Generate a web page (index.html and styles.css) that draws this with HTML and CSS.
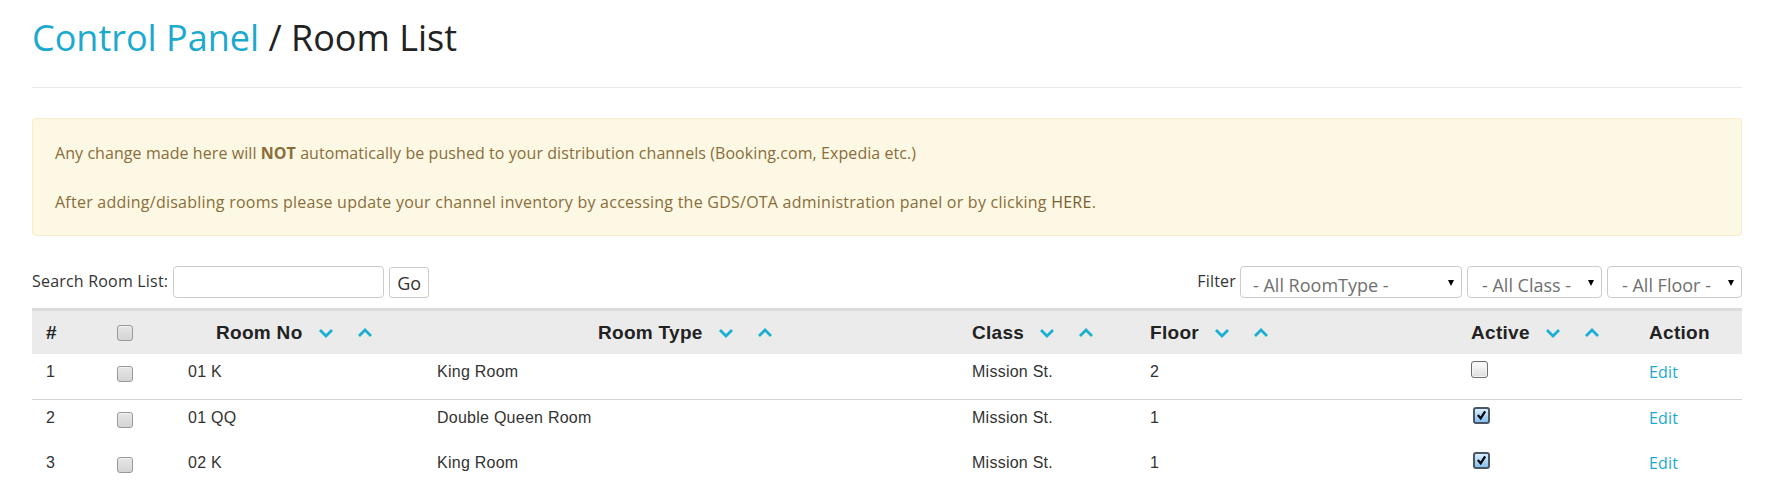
FILE: index.html
```html
<!DOCTYPE html>
<html lang="en">
<head>
<meta charset="utf-8">
<title>Room List</title>
<link rel="stylesheet" href="styles.css">
</head>
<body>
<div class="page">
  <h1 class="title"><span class="crumb">Control Panel</span> / Room List</h1>
  <hr class="rule">
  <div class="alert">
    <p class="first">Any change made here will <b>NOT</b> automatically be pushed to your distribution channels (Booking.com, Expedia etc.)</p>
    <p class="second">After adding/disabling rooms please update your channel inventory by accessing the GDS/OTA administration panel or by clicking <a class="here">HERE</a>.</p>
  </div>
  <div class="toolbar">
    <div class="search">
      <label class="lbl">Search Room List:</label>
      <input class="input" type="text">
      <button class="btn">Go</button>
    </div>
    <div class="filters">
      <span class="lbl">Filter</span>
      <div class="select wide"><span>- All RoomType -</span><i class="caret"></i></div>
      <div class="select"><span>- All Class -</span><i class="caret"></i></div>
      <div class="select"><span>- All Floor -</span><i class="caret"></i></div>
    </div>
  </div>
  <table class="grid">
    <colgroup>
      <col class="w1"><col class="w2"><col class="w3"><col class="w4"><col class="w5"><col class="w6"><col class="w7"><col class="w8">
    </colgroup>
    <thead>
      <tr>
        <th class="c-num">#</th>
        <th class="c-chk"><span class="cb"></span></th>
        <th class="h-roomno"><span class="sorthead">Room No<svg class="sort" viewBox="0 0 16 10"><polyline points="2,2 8,8 14,2"/></svg><svg class="sort up" viewBox="0 0 16 10"><polyline points="2,8 8,2 14,8"/></svg></span></th>
        <th class="h-roomtype"><span class="sorthead">Room Type<svg class="sort" viewBox="0 0 16 10"><polyline points="2,2 8,8 14,2"/></svg><svg class="sort up" viewBox="0 0 16 10"><polyline points="2,8 8,2 14,8"/></svg></span></th>
        <th><span class="sorthead">Class<svg class="sort" viewBox="0 0 16 10"><polyline points="2,2 8,8 14,2"/></svg><svg class="sort up" viewBox="0 0 16 10"><polyline points="2,8 8,2 14,8"/></svg></span></th>
        <th><span class="sorthead">Floor<svg class="sort" viewBox="0 0 16 10"><polyline points="2,2 8,8 14,2"/></svg><svg class="sort up" viewBox="0 0 16 10"><polyline points="2,8 8,2 14,8"/></svg></span></th>
        <th><span class="sorthead">Active<svg class="sort" viewBox="0 0 16 10"><polyline points="2,2 8,8 14,2"/></svg><svg class="sort up" viewBox="0 0 16 10"><polyline points="2,8 8,2 14,8"/></svg></span></th>
        <th>Action</th>
      </tr>
    </thead>
    <tbody>
      <tr class="sep">
        <td class="c-num">1</td>
        <td class="c-chk"><span class="cb"></span></td>
        <td>01 K</td>
        <td>King Room</td>
        <td>Mission St.</td>
        <td>2</td>
        <td class="c-act"><span class="cb2"></span></td>
        <td><a class="edit">Edit</a></td>
      </tr>
      <tr>
        <td class="c-num">2</td>
        <td class="c-chk"><span class="cb"></span></td>
        <td>01 QQ</td>
        <td>Double Queen Room</td>
        <td>Mission St.</td>
        <td>1</td>
        <td class="c-act"><span class="cb2 on"><svg viewBox="0 0 16 16"><polyline points="3.5,7.5 7,11.5 12.5,3"/></svg></span></td>
        <td><a class="edit">Edit</a></td>
      </tr>
      <tr>
        <td class="c-num">3</td>
        <td class="c-chk"><span class="cb"></span></td>
        <td>02 K</td>
        <td>King Room</td>
        <td>Mission St.</td>
        <td>1</td>
        <td class="c-act"><span class="cb2 on"><svg viewBox="0 0 16 16"><polyline points="3.5,7.5 7,11.5 12.5,3"/></svg></span></td>
        <td><a class="edit">Edit</a></td>
      </tr>
    </tbody>
  </table>
</div>
</body>
</html>
```
FILE: styles.css
```css
html, body {
  margin: 0;
  padding: 0;
  background: #fff;
}
body {
  font-family: "Open Sans", "Liberation Sans", Arial, sans-serif;
  color: #333;
  font-size: 16px;
}
.page {
  width: 1710px;
  margin-left: 32px;
}
.title {
  margin: 0;
  padding-top: 18px;
  font-size: 36px;
  font-weight: 400;
  line-height: 40px;
  color: #222;
}
.crumb {
  color: #1ba9cf;
}
.rule {
  margin: 29px 0 0 0;
  border: 0;
  border-top: 1px solid #eaeaea;
  height: 0;
}
.alert {
  margin-top: 30px;
  background: #fcf8e3;
  border: 1px solid #faebcc;
  border-radius: 4px;
  color: #8a6d3b;
  padding: 23px 20px 22px 22px;
  font-size: 16px;
  line-height: 22px;
}
.alert p {
  margin: 0;
}
.alert p.first {
  letter-spacing: 0.07px;
}
.alert p.second {
  margin-top: 27px;
  letter-spacing: 0.24px;
}
.alert b {
  font-weight: 700;
}
.here {
  color: #7a5f33;
}
.toolbar {
  margin-top: 30px;
  display: flex;
  justify-content: space-between;
  align-items: flex-start;
}
.search, .filters {
  display: flex;
  align-items: flex-start;
}
.lbl {
  font-size: 16px;
  line-height: 22px;
  margin-top: 4px;
  color: #333;
  letter-spacing: 0.2px;
}
.search .lbl {
  margin-right: 5px;
}
.filters .lbl {
  margin-right: 4px;
}
.input {
  width: 211px;
  height: 32px;
  box-sizing: border-box;
  border: 1px solid #ccc;
  border-radius: 4px;
  margin: 0;
  padding: 0 6px;
  font-family: inherit;
  font-size: 16px;
}
.btn {
  margin: 1px 0 0 5px;
  width: 40px;
  height: 31px;
  box-sizing: border-box;
  background: #fff;
  border: 1px solid #ccc;
  border-radius: 3px;
  font-family: "Open Sans", sans-serif;
  font-size: 18px;
  line-height: 24px;
  color: #333;
  padding: 0;
}
.select {
  box-sizing: border-box;
  height: 32px;
  width: 135px;
  margin-left: 5px;
  border: 1px solid #ccc;
  border-radius: 4px;
  padding: 6px 7px 0 14px;
  display: flex;
  justify-content: space-between;
  font-size: 18px;
  line-height: 24px;
  color: #707070;
}
.select.wide {
  width: 222px;
  margin-left: 0;
  padding-left: 12px;
}
.caret {
  width: 0;
  height: 0;
  margin-top: 7px;
  border-left: 3.5px solid transparent;
  border-right: 3.5px solid transparent;
  border-top: 6px solid #000;
}
.grid {
  width: 1710px;
  table-layout: fixed;
  border-collapse: collapse;
  margin-top: 10px;
  font-family: "Liberation Sans", Arial, sans-serif;
  font-size: 16px;
  color: #333;
}
.w1 { width: 73px; }
.w2 { width: 75px; }
.w3 { width: 249px; }
.w4 { width: 535px; }
.w5 { width: 178px; }
.w6 { width: 321px; }
.w7 { width: 178px; }
.w8 { width: 101px; }
.grid thead tr {
  background: #ebebeb;
  border-top: 3px solid #dcdcdc;
}
.grid th {
  height: 43px;
  padding: 0 0 0 8px;
  text-align: left;
  font-size: 19px;
  font-weight: 700;
  color: #222;
  vertical-align: middle;
  letter-spacing: 0.3px;
}
.grid td {
  padding: 8px 0 16px 8px;
  line-height: 20px;
  vertical-align: top;
  letter-spacing: 0.25px;
}
.grid tr.sep td {
  border-bottom: 1px solid #d4d4d4;
}
.grid .c-num {
  padding-left: 14px;
}
.grid .c-chk {
  padding-left: 12px;
}
.grid th.h-roomno {
  padding-left: 36px;
}
.grid th.h-roomtype {
  padding-left: 169px;
}
.sorthead {
  display: inline-flex;
  align-items: center;
}
.sort {
  width: 16px;
  height: 10px;
  margin-left: 15px;
  fill: none;
  stroke: #1aaed3;
  stroke-width: 2.8;
}
.sort.up {
  margin-left: 23px;
}
.cb {
  display: block;
  box-sizing: border-box;
  width: 16px;
  height: 16px;
  border: 1px solid #999;
  border-radius: 3px;
  background: linear-gradient(#e6e6e6, #d4d4d4);
  box-shadow: inset 0 1px 1px #f2f2f2;
}
.grid td.c-chk .cb {
  margin-top: 4px;
}
.grid td.c-act {
  padding-top: 7px;
}
.cb2 {
  display: block;
  box-sizing: border-box;
  width: 17px;
  height: 17px;
  border: 1px solid #6f6f6f;
  border-radius: 3px;
  background: linear-gradient(#ffffff, #dcdcdc);
  box-shadow: inset 0 0 0 1px #f4f4f4;
}
.cb2.on {
  margin-left: 2px;
  border: 2px solid #4a5566;
  background: linear-gradient(#d9efff, #86c0ef);
  box-shadow: none;
}
.cb2 svg {
  display: block;
  width: 13px;
  height: 13px;
  fill: none;
  stroke: #05080f;
  stroke-width: 2.8;
}
.edit {
  font-family: "Open Sans", sans-serif;
  color: #1ba9cf;
  font-size: 16px;
  letter-spacing: 0.2px;
  cursor: pointer;
}
```
